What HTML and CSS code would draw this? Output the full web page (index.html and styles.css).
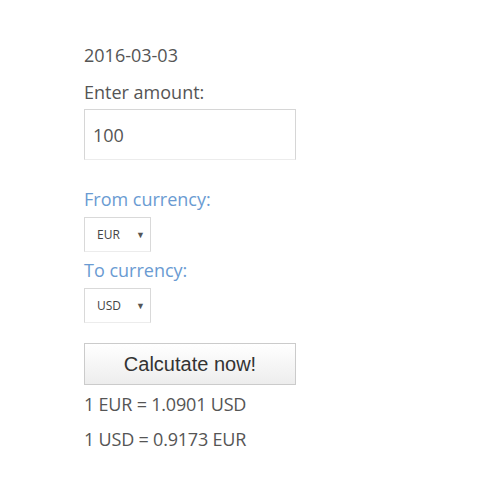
FILE: index.html
```html
<!DOCTYPE html>
<html>
<head>
<meta charset="utf-8">
<link rel="stylesheet" href="styles.css">
</head>
<body>
<div class="wrap">
  <div class="date">2016-03-03</div>
  <div class="label">Enter amount:</div>
  <div class="amount">100</div>
  <div class="label blue first">From currency:</div>
  <div class="select"><span>EUR</span><span class="arrow">▼</span></div>
  <div class="label blue second">To currency:</div>
  <div class="select"><span>USD</span><span class="arrow">▼</span></div>
  <div class="btn">Calcutate now!</div>
  <div class="result">1 EUR = 1.0901 USD</div>
  <div class="result r2">1 USD = 0.9173 EUR</div>
</div>
</body>
</html>
```
FILE: styles.css
```css
html, body { margin: 0; padding: 0; background: #fff; }
.wrap {
  padding: 43px 0 0 84px;
  font-family: "Open Sans", "Liberation Sans", sans-serif;
  font-size: 18px;
  color: #555;
  display: flex;
  flex-direction: column;
  align-items: flex-start;
}
.date, .label, .result { line-height: 24px; height: 24px; }
.label { margin-top: 13px; }
.result { letter-spacing: -0.2px; }
.amount {
  margin-top: 5px;
  box-sizing: border-box;
  width: 212px;
  height: 51px;
  border: 1px solid #d6d6d6;
  border-bottom-color: #ececec;
  padding: 0 0 0 8px;
  line-height: 50px;
  font-size: 18px;
  color: #555;
}
.blue { color: #6a9bd2; }
.label.first { margin-top: 27px; }
.label.second { margin-top: 6px; }
.select {
  margin-top: 6px;
  box-sizing: border-box;
  width: 67px;
  height: 35px;
  border: 1px solid #d9d9d9;
  border-bottom-color: #ececec;
  display: flex;
  align-items: center;
  justify-content: space-between;
  padding: 0 5px 0 12px;
  font-size: 12px;
  color: #444;
}
.arrow { font-size: 9px; color: #555; }
.btn {
  margin-top: 20px;
  box-sizing: border-box;
  width: 212px;
  height: 42px;
  border: 1px solid #cbcbcb;
  background: linear-gradient(#ffffff, #ededed);
  font-family: "Liberation Sans", Arial, sans-serif;
  font-size: 20px;
  color: #333;
  text-align: center;
  line-height: 40px;
}
.result { margin-top: 7px; }
.result.r2 { margin-top: 11px; }
```
